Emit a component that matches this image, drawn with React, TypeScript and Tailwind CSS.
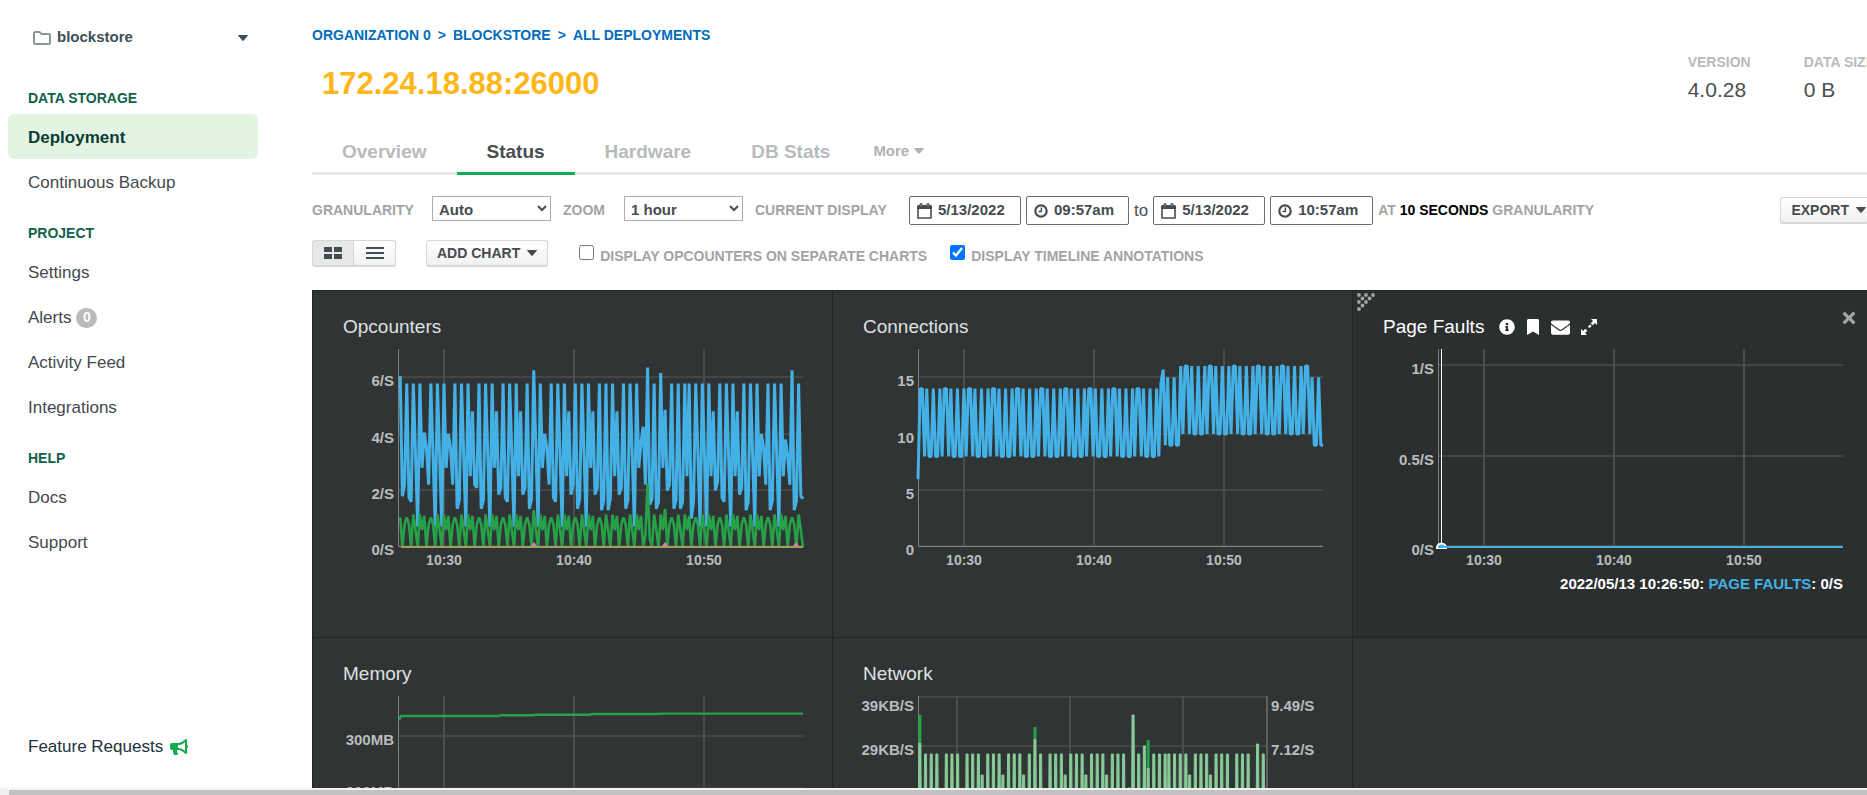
import type { ReactNode } from "react";
import { FaBookmark, FaBullhorn, FaEnvelope, FaInfoCircle, FaTimes } from "react-icons/fa";

type Point = [number, number];

const SAMPLES = 186;
const BLUE = "#43b1e5";
const GREEN = "#27a148";
const LIGHT_GREEN = "#88cb98";

const PLOT_LEFT = 86;
const PLOT_RIGHT = 491;
const PLOT_TOP = 59;
const PLOT_BOTTOM = 257;

/* ---------- data ---------- */

const high = 5.78;
const queries: Point[] = [
  [1, 6.05], [2, 1.8], [3, 2.2], [4, high], [5, 1.75], [6, 1.6], [7, high], [9, 0.72], [10, high], [11, 2.8],
  [12, 4.05], [13, 3.5], [14, 2.2], [15, high], [17, 0.72], [18, high], [20, 0.72], [21, high], [22, 2.8], [23, 4],
  [24, 3.5], [25, 2.2], [26, high], [27, 1.35], [28, 1.65], [29, high], [31, 0.72], [32, high], [33, 2.5], [34, 4.8],
  [35, 2.2], [36, 2.1], [37, high], [38, 1.35], [39, 1.65], [40, high], [42, 0.72], [43, high], [44, 2.8], [45, 4.8],
  [46, 1.85], [47, 2.1], [48, high], [49, 1.75], [50, 1.6], [51, high], [53, 0.72], [54, high], [55, 2.5], [56, 4.8],
  [57, 1.85], [58, 2.1], [59, high], [60, 1.35], [61, 1.7], [62, 6.25], [64, 0.72], [65, high], [66, 2.8], [67, 4],
  [68, 3.5], [69, 2.2], [70, high], [71, 1.75], [72, 1.6], [73, high], [75, 0.72], [76, high], [77, 2.5], [78, 4.8],
  [79, 1.85], [80, 2.2], [81, high], [82, 1.35], [83, 1.7], [84, high], [86, 0.72], [87, high], [88, 2.8], [89, 4.8],
  [90, 1.85], [91, 2.1], [92, high], [93, 1.3], [94, 1.65], [95, high], [96, 1.3], [97, 1.7], [98, high], [99, 2.5],
  [100, 4.8], [101, 1.85], [102, 2.1], [103, high], [104, 1.35], [105, 1.65], [106, high], [108, 0.72], [109, high],
  [110, 2.8], [111, 3.7], [112, 4.25], [113, 2.2], [114, 6.35], [115, 1.5], [116, 1.7], [117, high], [118, 1.35],
  [119, 1.6], [120, 6.15], [121, 2.8], [122, 4.85], [123, 2], [124, 2.2], [125, high], [126, 1.35], [127, 1.65],
  [128, high], [129, 1.35], [130, 1.6], [131, high], [132, 2.5], [133, high], [134, 1], [135, 1.6], [136, high],
  [138, 0.72], [139, high], [141, 0.72], [142, high], [143, 2.5], [144, 4.8], [145, 2], [146, 2.3], [147, high],
  [148, 1.75], [149, 1.6], [150, high], [152, 0.72], [153, high], [154, 2.5], [155, 4.8], [156, 1.85], [157, 2.1],
  [158, high], [159, 1.3], [160, 1.6], [161, high], [163, 0.72], [164, high], [165, 2.5], [166, 4], [167, 3.5],
  [168, 2.2], [169, high], [170, 1.3], [171, 1.65], [172, high], [174, 0.72], [175, high], [176, 2.5], [177, 3.8],
  [178, 3.2], [179, 2.2], [180, 6.25], [181, 1.3], [182, 1.65], [183, high], [184, 1.8], [185, 1.7],
];

const commandCycle = [1.05, 0.8, 0, 1.15, 0.6, 0, 1.15, 0.6, 1.1, 0, 0.8];
const commandSpikes: Record<number, number> = { 1: 1.05, 2: 0, 62: 1.3, 113: 0.4, 114: 2.25, 115: 0.3, 122: 1.35, 185: 0 };
const commands: Point[] = Array.from({ length: SAMPLES - 1 }, (_, n) => {
  const i = n + 1;
  return [i, commandSpikes[i] ?? commandCycle[(i + 7) % 11]];
});

const busyCycle = [true, false, false, true, false, false, true, false, true, true, false];
const connections: Point[] = Array.from({ length: SAMPLES }, (_, i) => {
  const busy = busyCycle[(i + 7) % 11];
  if (i === 0) return [i, 6];
  if (i <= 2) return [i, 14];
  if (i === 111) return [i, 14.5];
  if (i === 112) return [i, 15.7];
  if (i < 111) return [i, busy ? 14 : 8];
  if (i < 120 || i >= 180) return [i, busy ? 15 : 9];
  return [i, busy ? 16 : 10];
});

const networkTall = [
  4, 7, 10, 15, 18, 21, 26, 29, 32, 37, 40, 43, 48, 51, 54, 59, 65, 70, 73, 76, 81, 84, 87, 92, 95, 98, 103, 106, 109,
  117, 125, 128, 131, 133, 136, 139, 142, 147, 150, 153, 158, 161, 164, 169, 172, 175, 183,
];
const networkShort = [34, 45, 56, 78, 89, 100, 144, 155];
const networkPeaks: Point[] = [
  ...networkTall.map((i): Point => [i, 117]),
  ...networkShort.map((i): Point => [i, 138]),
  ...([[1, 106], [62, 102], [112, 151], [114, 78], [120, 109], [122, 131], [180, 107]] as Point[]),
].sort((a, b) => a[0] - b[0]);
const networkSurges: [number, number, number][] = [
  [1, 78, 106],
  [62, 90, 102],
  [122, 103, 131],
];

/* ---------- chart pieces ---------- */

const sampleX = (i: number, right = PLOT_RIGHT) => PLOT_LEFT + (i * (right - PLOT_LEFT)) / (SAMPLES - 1);

const line = (data: Point[], perUnit: number) =>
  data.map(([i, v]) => `${sampleX(i).toFixed(2)},${(PLOT_BOTTOM - v * perUnit).toFixed(2)}`).join(" ");

interface Tick {
  at: number;
  label: string;
  drop?: number;
}

const timeTicks: Tick[] = [
  { at: 132, label: "10:30" },
  { at: 262, label: "10:40" },
  { at: 392, label: "10:50" },
];

interface PlotProps {
  name: string;
  yTicks: Tick[];
  rightTicks?: Tick[];
  xTicks?: Tick[];
  right?: number;
  children?: ReactNode;
}

function Plot({ name, yTicks, rightTicks = [], xTicks = timeTicks, right = PLOT_RIGHT, children }: PlotProps) {
  return (
    <svg
      role="img"
      aria-label={name}
      viewBox="0 54 520 226"
      className="block h-[226px] w-[520px] fill-[#b9bdbe] text-[15px] font-bold"
    >
      {yTicks.map((t) => (
        <g key={t.label}>
          <path d={`M${PLOT_LEFT} ${t.at}H${right}`} stroke="#424647" strokeWidth="2" />
          <text x={PLOT_LEFT - 4} y={t.at + (t.drop ?? 9)} textAnchor="end">
            {t.label}
          </text>
        </g>
      ))}
      {rightTicks.map((t) => (
        <text key={t.label} x={right + 4} y={t.at + (t.drop ?? 9)}>
          {t.label}
        </text>
      ))}
      {xTicks.map((t) => (
        <g key={t.label}>
          <path d={`M${t.at} ${PLOT_TOP}V${PLOT_BOTTOM}`} stroke="#4a4e4f" strokeWidth="2" />
          <text x={t.at} y="275" textAnchor="middle" className="text-[14px]">
            {t.label}
          </text>
        </g>
      ))}
      {rightTicks.length > 0 && <path d={`M${right} ${PLOT_TOP}V${PLOT_BOTTOM}`} stroke="#5c6061" strokeWidth="2" />}
      <path d={`M${PLOT_LEFT}.5 ${PLOT_TOP}V${PLOT_BOTTOM - 1}.5H${right}`} fill="none" stroke="#7e8283" strokeWidth="1" />
      {children}
    </svg>
  );
}

interface CellProps {
  title?: string;
  active?: boolean;
  children?: ReactNode;
}

function ExpandIcon() {
  return (
    <svg viewBox="0 0 16 16" className="size-4 fill-current" aria-hidden="true">
      <path d="M16 0v6l-2-2-2.300 2.300-2-2L12 2l-2-2zM0 16v-6l2 2 2.300-2.300 2 2L4 14l2 2zM7 7.400 9 5.400l1.700 1.700-2 2-1-1-.7.700z" />
    </svg>
  );
}

function DragHandle() {
  const dots: Point[] = [
    [2, 2], [9, 2], [16, 2], [5.5, 5.5], [12.5, 5.5], [2, 9], [9, 9], [5.5, 12.5], [2, 16],
  ];
  return (
    <svg viewBox="0 0 19 19" className="absolute top-[2px] left-1 size-[19px] fill-[#a3a5a5]" aria-hidden="true">
      {dots.map(([x, y]) => (
        <circle key={`${x}-${y}`} cx={x} cy={y} r="1.900" />
      ))}
    </svg>
  );
}

function Cell({ title, active = false, children }: CellProps) {
  return (
    <section
      className={`relative h-[347px] border-t border-l border-[#232627] ${active ? "bg-[#2c2f30]" : "bg-[#303435]"}`}
    >
      <div className={`flex h-[53px] items-end gap-[15px] pl-[30px] ${active ? "text-white" : "text-[#dfe1e1]"}`}>
        {title && <h2 className="text-[19px] leading-[34px]">{title}</h2>}
        {active && (
          <div className="flex h-[34px] items-center gap-[11px]">
            <button aria-label="Chart info"><FaInfoCircle className="size-4" /></button>
            <button aria-label="Bookmark chart"><FaBookmark className="h-4 w-[14px]" /></button>
            <button aria-label="Email chart"><FaEnvelope className="size-[19px]" /></button>
            <button aria-label="Expand chart"><ExpandIcon /></button>
          </div>
        )}
      </div>
      {active && (
        <>
          <DragHandle />
          <button aria-label="Remove chart" className="absolute top-[18px] right-[14px] text-[#a3a5a5]">
            <FaTimes className="size-[18px]" />
          </button>
        </>
      )}
      <div className="-ml-px">{children}</div>
    </section>
  );
}

function Caret() {
  return (
    <svg viewBox="0 0 10 6" className="h-[6px] w-[10px] shrink-0 fill-current" aria-hidden="true">
      <path d="M.5 0h9q.700.200.3.800L5.700 5.600Q5 6.200 4.300 5.600L.2.800Q-.2.200.5 0z" />
    </svg>
  );
}

/* ---------- navigation ---------- */

function NavHeading({ children }: { children: ReactNode }) {
  return <h3 className="px-5 pt-[19px] pb-[6px] text-[14px] leading-5 font-bold text-[#116149] uppercase">{children}</h3>;
}

function NavItem({ current = false, children }: { current?: boolean; children: ReactNode }) {
  return (
    <a
      href="#"
      aria-current={current ? "page" : undefined}
      className={`flex h-[45px] items-center gap-[5px] rounded-md px-5 pt-[2px] text-[17px] ${
        current ? "bg-[#e3f4e3] font-bold text-[#0b3b35]" : "text-[#43494e]"
      }`}
    >
      {children}
    </a>
  );
}

function Sidebar() {
  return (
    <nav className="flex h-full w-[266px] shrink-0 flex-col pl-2">
      <button className="mt-[26px] flex h-[23px] w-[250px] items-center gap-[6px] pr-[10px] pl-[25px] text-[15px] font-bold text-[#3d4f58]">
        <svg viewBox="0 0 18 14" className="h-[14px] w-[18px] fill-none stroke-[#89979b]" strokeWidth="2" aria-hidden="true">
          <path d="M1 2.500Q1 1 2.500 1H6.500L8.500 3H15.500Q17 3 17 4.500V11.500Q17 13 15.500 13H2.500Q1 13 1 11.500Z" />
        </svg>
        <span className="grow text-left">blockstore</span>
        <Caret />
      </button>
      <div className="mt-5 w-[250px]">
        <NavHeading>Data Storage</NavHeading>
        <NavItem current>Deployment</NavItem>
        <NavItem>Continuous Backup</NavItem>
        <NavHeading>Project</NavHeading>
        <NavItem>Settings</NavItem>
        <NavItem>
          Alerts
          <span className="flex h-5 w-[21px] items-center justify-center rounded-full bg-[#b8bbbb] text-[14px] font-bold text-white">
            0
          </span>
        </NavItem>
        <NavItem>Activity Feed</NavItem>
        <NavItem>Integrations</NavItem>
        <NavHeading>Help</NavHeading>
        <NavItem>Docs</NavItem>
        <NavItem>Support</NavItem>
      </div>
      <a href="#" className="mt-auto mb-[29px] flex h-6 items-center gap-[7px] px-5 text-[17px] text-[#21313c]">
        Feature Requests
        <FaBullhorn className="size-[18px] text-[#13aa52]" />
      </a>
    </nav>
  );
}

/* ---------- header and controls ---------- */

function Stat({ label, value }: { label: string; value: string }) {
  return (
    <div>
      <dt className="text-[14px] leading-5 font-bold text-[#b8bbbb] uppercase">{label}</dt>
      <dd className="pt-1 text-[21px] leading-7 text-[#494f52]">{value}</dd>
    </div>
  );
}

const tabs = ["Overview", "Status", "Hardware", "DB Stats"];

function Tabs() {
  return (
    <div className="flex h-12 border-b-[3px] border-[#e7e9e8]">
      {tabs.map((tab) => (
        <a
          key={tab}
          href="#"
          className={`-mb-[3px] border-b-[3px] px-[30px] text-[19px] leading-[50px] font-bold ${
            tab === "Status" ? "border-[#13aa52] text-[#464c4f]" : "border-transparent text-[#b8bbbb]"
          }`}
        >
          {tab}
        </a>
      ))}
      <button className="flex items-center gap-[5px] pt-[3px] pl-[13px] text-[15px] font-bold text-[#b0b3b3]">
        More
        <Caret />
      </button>
    </div>
  );
}

const buttonLook =
  "flex h-[27px] items-center gap-[7px] rounded-[3px] border border-b-2 border-[#d5d8d7] bg-gradient-to-b from-white to-[#f0f1f1] px-[10px] text-[14px] font-bold text-[#464c4f] uppercase";

function CalendarIcon() {
  return (
    <svg viewBox="0 0 15 16" className="h-4 w-[15px] shrink-0" aria-hidden="true">
      <path d="M1 4.500h13V15H1z" fill="none" stroke="#464c4f" strokeWidth="1.600" />
      <path d="M0 3.500Q0 2 1.500 2H2.500V1.500a1.500 1.500 0 0 1 3 0V2h4v-.5a1.500 1.500 0 0 1 3 0V2h1Q15 2 15 3.500V6H0z" fill="#464c4f" />
      <path d="M4 1v2.500M11 1v2.500" stroke="#a9adad" strokeWidth=".8" />
    </svg>
  );
}

function ClockIcon() {
  return (
    <svg viewBox="0 0 14 14" className="size-[14px] shrink-0 fill-none stroke-[#464c4f]" aria-hidden="true">
      <circle cx="7" cy="7" r="5.700" strokeWidth="2.200" />
      <path d="M7.400 3.500V7.500H4.500" strokeWidth="1.500" />
    </svg>
  );
}

function Picker({ label, value, kind }: { label: string; value: string; kind: "date" | "time" }) {
  return (
    <label
      className={`flex h-[29px] items-center gap-[6px] rounded-[2px] border border-[#6b6f70] px-[7px] text-[#464c4f] ${
        kind === "date" ? "w-[112px]" : "w-[103px]"
      }`}
    >
      {kind === "date" ? <CalendarIcon /> : <ClockIcon />}
      <input aria-label={label} defaultValue={value} className="w-0 min-w-0 flex-1 text-[15px] font-bold outline-none" />
    </label>
  );
}

const selectLook =
  "h-[25px] w-[119px] self-start border border-[#a9adad] bg-white pt-[2px] pl-[2px] text-[15px] font-bold text-[#464c4f]";

function Filters() {
  return (
    <div className="mt-[21px] flex h-[29px] items-center text-[14px] font-bold text-[#a2a4a4]">
      <label htmlFor="granularity" className="w-[120px]">GRANULARITY</label>
      <select id="granularity" className={selectLook}>
        <option>Auto</option>
      </select>
      <label htmlFor="zoom" className="ml-3 w-[61px]">ZOOM</label>
      <select id="zoom" className={selectLook}>
        <option>1 hour</option>
      </select>
      <span className="ml-3 w-[154px]">CURRENT DISPLAY</span>
      <div className="flex items-center gap-[5px]">
        <Picker kind="date" label="Start date" value="5/13/2022" />
        <Picker kind="time" label="Start time" value="09:57am" />
        <span className="text-[17px] font-normal text-[#494f52]">to</span>
        <Picker kind="date" label="End date" value="5/13/2022" />
        <Picker kind="time" label="End time" value="10:57am" />
        <span>
          AT <span className="text-black">10 SECONDS</span> GRANULARITY
        </span>
      </div>
      <button className={`${buttonLook} ml-auto`}>
        Export
        <Caret />
      </button>
    </div>
  );
}

function ChartOptions() {
  return (
    <div className="mt-[15px] flex h-[27px] items-start text-[14px] font-bold text-[#a2a4a4]">
      <div className="flex">
        <button aria-label="Grid view" className="flex h-[27px] w-[42px] items-center justify-center rounded-l-[3px] border border-b-2 border-[#d5d8d7] bg-[#e7e9e8]">
          <svg viewBox="0 0 18 12" className="h-3 w-[18px] fill-[#464c4f]" aria-hidden="true">
            <path d="M0 0h8v5H0zM10 0h8v5h-8zM0 7h8v5H0zM10 7h8v5h-8z" />
          </svg>
        </button>
        <button aria-label="List view" className="flex h-[27px] w-[42px] items-center justify-center rounded-r-[3px] border border-b-2 border-l-0 border-[#d5d8d7] bg-gradient-to-b from-white to-[#f0f1f1]">
          <svg viewBox="0 0 18 12" className="h-3 w-[18px] fill-[#464c4f]" aria-hidden="true">
            <path d="M0 0h18v2H0zM0 5h18v2H0zM0 10h18v2H0z" />
          </svg>
        </button>
      </div>
      <button className={`${buttonLook} ml-[30px]`}>
        Add chart
        <Caret />
      </button>
      <label className="ml-[31px] flex w-[371px] items-start gap-[6px] leading-[32px]">
        <input type="checkbox" className="mt-[5px] size-[15px]" />
        DISPLAY OPCOUNTERS ON SEPARATE CHARTS
      </label>
      <label className="flex items-start gap-[6px] leading-[32px]">
        <input type="checkbox" defaultChecked className="mt-[5px] size-[15px]" />
        DISPLAY TIMELINE ANNOTATIONS
      </label>
    </div>
  );
}

function Charts() {
  const networkRight = 435;
  return (
    <div className="mt-[23px] grid grid-cols-3 bg-[#303435] pr-[5px]">
      <Cell title="Opcounters">
        <Plot
          name="Opcounters over time"
          yTicks={[
            { at: 87, label: "6/S" },
            { at: 144, label: "4/S" },
            { at: 200, label: "2/S" },
            { at: 256, label: "0/S" },
          ]}
        >
          <polyline points={line(queries, 28.28)} fill="none" stroke={BLUE} strokeWidth="3" strokeLinejoin="bevel" />
          <polyline points={line(commands, 28.28)} fill="none" stroke={GREEN} strokeWidth="2.600" strokeLinejoin="bevel" />
          <path d="M89 257H491" stroke="#a39d5b" strokeWidth="2" />
          <path d="M219 256l3-4 3 4zM350 256l3-4 3 4zM481 256l3-4 3 4z" fill="#d77fb4" />
        </Plot>
      </Cell>
      <Cell title="Connections">
        <Plot
          name="Connections over time"
          yTicks={[
            { at: 87, label: "15" },
            { at: 144, label: "10" },
            { at: 200, label: "5" },
            { at: 256, label: "0" },
          ]}
        >
          <polyline points={line(connections, 11.31)} fill="none" stroke={BLUE} strokeWidth="3" strokeLinejoin="bevel" />
        </Plot>
      </Cell>
      <Cell title="Page Faults" active>
        <Plot
          name="Page faults over time"
          yTicks={[
            { at: 75, label: "1/S" },
            { at: 166, label: "0.5/S" },
            { at: 256, label: "0/S" },
          ]}
        >
          <path d={`M89.5 ${PLOT_TOP}V${PLOT_BOTTOM}`} stroke="#ffffff" strokeWidth="1" />
          <path d="M85 258a4.500 4.500 0 0 1 9 0z" fill={BLUE} stroke="#ffffff" strokeWidth="2" />
          <path d="M86 257H491" stroke={BLUE} strokeWidth="2" />
        </Plot>
        <p className="pt-[6px] pr-[29px] text-right text-[15px] leading-4 font-bold text-white">
          2022/05/13 10:26:50: <span className="text-[#43b1e5]">PAGE FAULTS</span>: 0/S
        </p>
      </Cell>
      <Cell title="Memory">
        <Plot
          name="Memory over time"
          yTicks={[
            { at: 99, label: "300MB" },
            { at: 151, label: "200MB" },
            { at: 204, label: "100MB" },
            { at: 256, label: "0MB" },
          ]}
        >
          <path d="M87 83l2-4H186l3-.700H221l3-.600H277l3-.700H347l3-.400H491" fill="none" stroke={GREEN} strokeWidth="2.400" />
        </Plot>
      </Cell>
      <Cell title="Network">
        <Plot
          name="Network over time"
          right={networkRight}
          xTicks={[
            { at: 125, label: "10:30" },
            { at: 238, label: "10:40" },
            { at: 351, label: "10:50" },
          ]}
          yTicks={[
            { at: 60, label: "39KB/S", drop: 14 },
            { at: 109, label: "29KB/S" },
            { at: 157, label: "20KB/S" },
            { at: 207, label: "10KB/S" },
            { at: 256, label: "0KB/S" },
          ]}
          rightTicks={[
            { at: 60, label: "9.49/S", drop: 14 },
            { at: 109, label: "7.12/S" },
            { at: 157, label: "4.75/S" },
            { at: 207, label: "2.37/S" },
            { at: 256, label: "0/S" },
          ]}
        >
          <g stroke={LIGHT_GREEN} strokeWidth="1" fill={LIGHT_GREEN}>
            {networkPeaks.map(([i, y]) => {
              const x = sampleX(i, networkRight);
              return <path key={i} d={`M${x - 1} ${y}h2L${x + 1.8} ${PLOT_BOTTOM}h-3.600z`} />;
            })}
          </g>
          {networkSurges.map(([i, from, to]) => (
            <path key={i} d={`M${sampleX(i, networkRight)} ${from}V${to}`} stroke={GREEN} strokeWidth="3" />
          ))}
        </Plot>
      </Cell>
      <Cell />
    </div>
  );
}

export default function App() {
  return (
    <div className="flex h-screen flex-col overflow-hidden bg-white font-['Liberation_Sans',Arial,sans-serif]">
      <div className="min-h-0 flex-1 overflow-auto [scrollbar-width:none]">
        <div className="flex h-full min-w-[1877px]">
          <Sidebar />
          <main className="min-w-0 flex-1 pl-[46px]">
            <header className="flex h-[127px] justify-between">
              <div>
                <nav aria-label="Breadcrumb" className="flex gap-[7px] pt-[25px] text-[14px] leading-5 font-bold text-[#006cbc] uppercase">
                  <a href="#">Organization 0</a>
                  <span>&gt;</span>
                  <a href="#">Blockstore</a>
                  <span>&gt;</span>
                  <a href="#">All Deployments</a>
                </nav>
                <h1 className="pt-[19px] pl-[10px] text-[31px] leading-10 font-bold text-[#ffb618]">172.24.18.88:26000</h1>
              </div>
              <dl className="flex gap-[53px] pt-[52px] pr-[2px]">
                <Stat label="Version" value="4.0.28" />
                <Stat label="Data Size" value="0 B" />
              </dl>
            </header>
            <Tabs />
            <Filters />
            <ChartOptions />
            <Charts />
          </main>
        </div>
      </div>
      <div className="h-[7px] shrink-0 bg-[#f1f1f1] pt-[2px] pl-[9px]" aria-hidden="true">
        <div className="h-full bg-[#c1c1c1]" />
      </div>
    </div>
  );
}
